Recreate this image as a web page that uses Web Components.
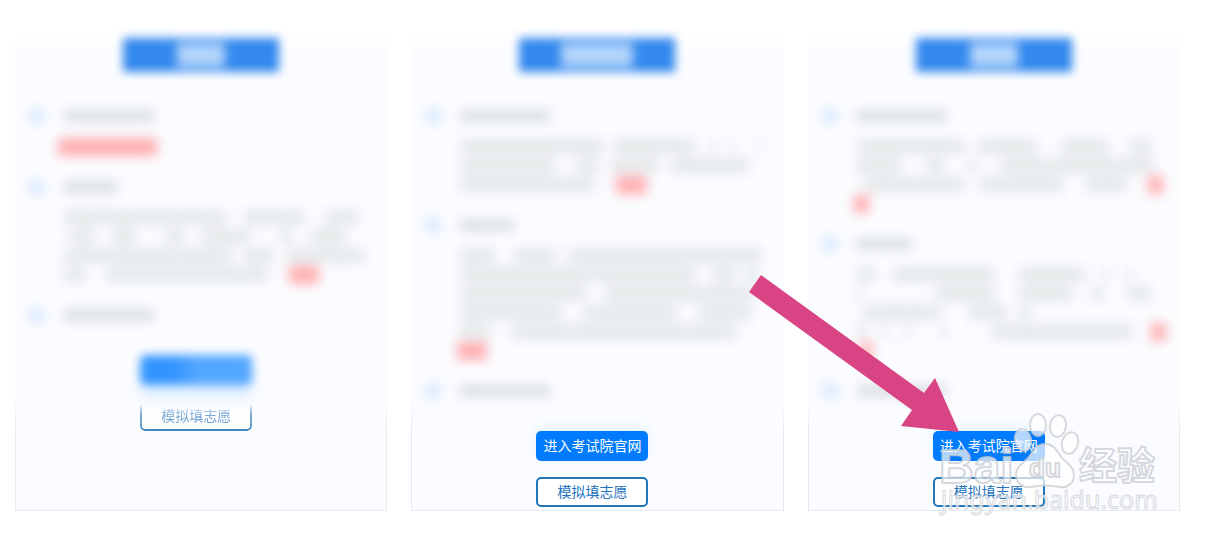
<!DOCTYPE html>
<html lang="zh-CN">
<head>
<meta charset="utf-8">
<title>模拟填志愿</title>
<style>
  body { margin: 0; background: #fff; font-family: "Noto Sans CJK SC", sans-serif; font-size: 14px; }
</style>
</head>
<body>
<option-board>
  <option-card>
    <soft-banner slot="banner" style="--label: 48px"></soft-banner>
    <soft-step heading="90" lines="hot:-2-31"></soft-step>
    <soft-step heading="54" lines="0-54,60-80,87-98|2-10,16-24,34-40,46-62,72-76,82-94|0-56,60-70,74-100|0-7,14-68,hot:75-85"></soft-step>
    <soft-step heading="90"></soft-step>
    <action-button slot="actions" kind="veiled"></action-button>
    <action-button slot="actions" kind="fading">模拟填志愿</action-button>
  </option-card>
  <option-card>
    <soft-banner slot="banner" style="--label: 72px"></soft-banner>
    <soft-step heading="90" lines="0-48,51-78,83-85,90-91,99-100|0-32,39-46,50-66,70-96|0-45,hot:52-62"></soft-step>
    <soft-step heading="54" lines="0-12,18-32,36-100|0-78,84-92,95-99|0-42,48-98|0-34,41-72,79-97|0-10,17-92|hot:-1-9"></soft-step>
    <soft-step heading="90"></soft-step>
    <action-button slot="actions" kind="primary">进入考试院官网</action-button>
    <action-button slot="actions" kind="outline">模拟填志愿</action-button>
  </option-card>
  <option-card>
    <soft-banner slot="banner" style="--label: 48px"></soft-banner>
    <soft-step heading="90" lines="0-36,40-60,68-84,91-98|0-15,23-29,37-40,48-99|2-36,41-69,76-90,hot:97-102|hot:-1-4"></soft-step>
    <soft-step heading="54" lines="0-6,12-46,54-76,82-84,90-92|0-2,26-46,54-72,78-82,90-98|2-28,37-50,54-58|0-3,8-10,16-18,28-30,45-92,hot:98-103|hot:1-5"></soft-step>
    <soft-step heading="90"></soft-step>
    <action-button slot="actions" kind="primary">进入考试院官网</action-button>
    <action-button slot="actions" kind="outline">模拟填志愿</action-button>
    <pointer-arrow slot="overlay"></pointer-arrow>
    <site-mark slot="overlay"></site-mark>
  </option-card>
</option-board>

<script>
class Base extends HTMLElement {
  constructor() {
    super();
    this.attachShadow({ mode: "open" });
  }
  paint(html) { this.shadowRoot.innerHTML = html; }
}

customElements.define("option-board", class extends Base {
  connectedCallback() {
    this.paint(`
      <style>
        :host { display: block; }
        main { display: grid; grid-template-columns: repeat(3, minmax(0, 1fr)); gap: 24px; padding: 32px 45px 32px 15px; }
      </style>
      <main><slot></slot></main>`);
  }
});

customElements.define("option-card", class extends Base {
  connectedCallback() {
    this.paint(`
      <style>
        :host { display: block; position: relative; box-sizing: border-box; border: 1px solid;
          border-image: linear-gradient(transparent 76%, #e6eaee 84%) 1;
          background: linear-gradient(#fff, #fbfcff 20px);
          padding: 5px 0 3px; }
        .steps { padding: 32px 22px 0 13px; filter: blur(6px); }
        .actions { display: flex; flex-direction: column; align-items: center; gap: 16px; padding: 28px 10px 0 0; }
      </style>
      <slot name="banner"></slot>
      <div class="steps"><slot></slot></div>
      <div class="actions"><slot name="actions"></slot></div>
      <slot name="overlay"></slot>`);
  }
});

customElements.define("soft-banner", class extends Base {
  connectedCallback() {
    this.paint(`
      <style>
        :host { display: flex; align-items: center; justify-content: center; width: 156px; height: 34px; margin: 0 auto; background: #3389ee; filter: blur(5px); }
        i { width: var(--label); height: 24px; background: #b4d5fb; filter: blur(2px); }
      </style><i></i>`);
  }
});

/* A step: round marker, heading bar, then text lines given as percent ranges. */
customElements.define("soft-step", class extends Base {
  connectedCallback() {
    const rows = (this.getAttribute("lines") || "").split("|").filter(Boolean);
    const body = rows.map(row => {
      let end = 0;
      const bars = row.split(",").map(part => {
        const hot = part.startsWith("hot:");
        const [, from, to] = part.replace("hot:", "").match(/^(-?\d+)-(\d+)$/);
        const a = Number(from), b = Number(to);
        const bar = `<i class="${hot ? "hot" : ""}" style="margin-left:${a - end}%;width:${b - a}%"></i>`;
        end = b;
        return bar;
      }).join("");
      return `<div class="line">${bars}</div>`;
    }).join("");
    this.paint(`
      <style>
        :host { display: block; }
        :host(:not(:last-of-type)) { margin-bottom: 19px; }
        .head { display: flex; align-items: center; gap: 19px; height: 24px; }
        .dot { width: 16px; height: 16px; border-radius: 8px; background: #d5e7ff; }
        .title { width: ${this.getAttribute("heading")}px; height: 12px; background: #dbdfe1; }
        .body { padding: 9px 0 0 35px; }
        .line { display: flex; align-items: center; height: 19px; }
        .line i { flex: none; height: 15px; background: #e5e8ea; }
        .line .hot { height: 18px; background: #ffaeb1; }
      </style>
      <div class="head"><span class="dot"></span><span class="title"></span></div>
      ${body ? `<div class="body">${body}</div>` : ""}`);
  }
});

customElements.define("action-button", class extends Base {
  connectedCallback() {
    const veiled = this.getAttribute("kind") === "veiled";
    this.paint(`
      <style>
        :host { display: block; width: 112px; height: 30px; }
        button { display: block; box-sizing: border-box; width: 100%; height: 30px; margin: 0; padding: 0 0 2px; border: 2px solid #2177b8; border-radius: 5px;
          background: #fff; color: #2272bd; font: inherit; line-height: 24px; white-space: nowrap; cursor: pointer; }
        :host([kind=primary]) button { border-color: #007bfe; background: #007bfe; color: #fff; box-shadow: 0 -4px 12px #e6f4ff; }
        :host([kind=veiled]) { filter: blur(5px); }
        :host([kind=veiled]) button { border-color: #489fff; background: linear-gradient(90deg, #3294ff 30%, #54a7ff 50%); box-shadow: 0 12px 10px #dcedff; }
        :host([kind=fading]) button { mask-image: linear-gradient(transparent 2px, rgba(0,0,0,.6) 14px, rgba(0,0,0,.65) 22px, rgba(0,0,0,.9)); }
      </style>
      <button type="button"${veiled ? ' aria-label="进入考试院官网"' : ""}><slot></slot></button>`);
  }
});

customElements.define("pointer-arrow", class extends Base {
  connectedCallback() {
    this.paint(`
      <style>
        :host { position: absolute; right: 219px; bottom: 78px; pointer-events: none; }
        svg { display: block; }
      </style>
      <svg width="212" height="158" viewBox="0 0 212 158" aria-hidden="true">
        <path d="M13 1 176 119 187 104 211 158 153 152 164 136 1 18Z" fill="#d94484"/>
      </svg>`);
  }
});

customElements.define("site-mark", class extends Base {
  connectedCallback() {
    this.paint(`
      <style>
        :host { position: absolute; right: 9px; bottom: -12px; pointer-events: none; }
        svg { display: block; }
      </style>
      <svg width="240" height="116" viewBox="0 0 240 116" fill="#fff" fill-opacity=".7" stroke="#c9ccd2" stroke-opacity=".75" stroke-width="2" stroke-linejoin="round">
        <ellipse cx="93" cy="34" rx="8" ry="11" transform="rotate(-12 93 34)"/>
        <ellipse cx="108" cy="19" rx="8" ry="11"/>
        <ellipse cx="128" cy="20" rx="8" ry="11" transform="rotate(10 128 20)"/>
        <ellipse cx="140" cy="37" rx="8" ry="11" transform="rotate(15 140 37)"/>
        <path d="M115 38c9 0 12 7 17 14 7 6 12 10 12 17 0 8-6 13-14 12-10-2-20-2-29 0-9 1-15-4-15-12 0-9 8-12 13-18 4-6 7-13 16-13Z"/>
        <text x="9" y="77" font-family="Liberation Sans, sans-serif" font-weight="700" font-size="48">Bai</text>
        <text x="99" y="71" font-family="Liberation Sans, sans-serif" font-weight="700" font-size="26">du</text>
        <text x="149" y="73" font-family="Noto Sans CJK SC, sans-serif" font-weight="700" font-size="38">经验</text>
        <text x="11" y="103" font-family="Noto Sans, sans-serif" font-size="25" stroke-width="1">jingyan.baidu.com</text>
      </svg>`);
  }
});
</script>
</body>
</html>
